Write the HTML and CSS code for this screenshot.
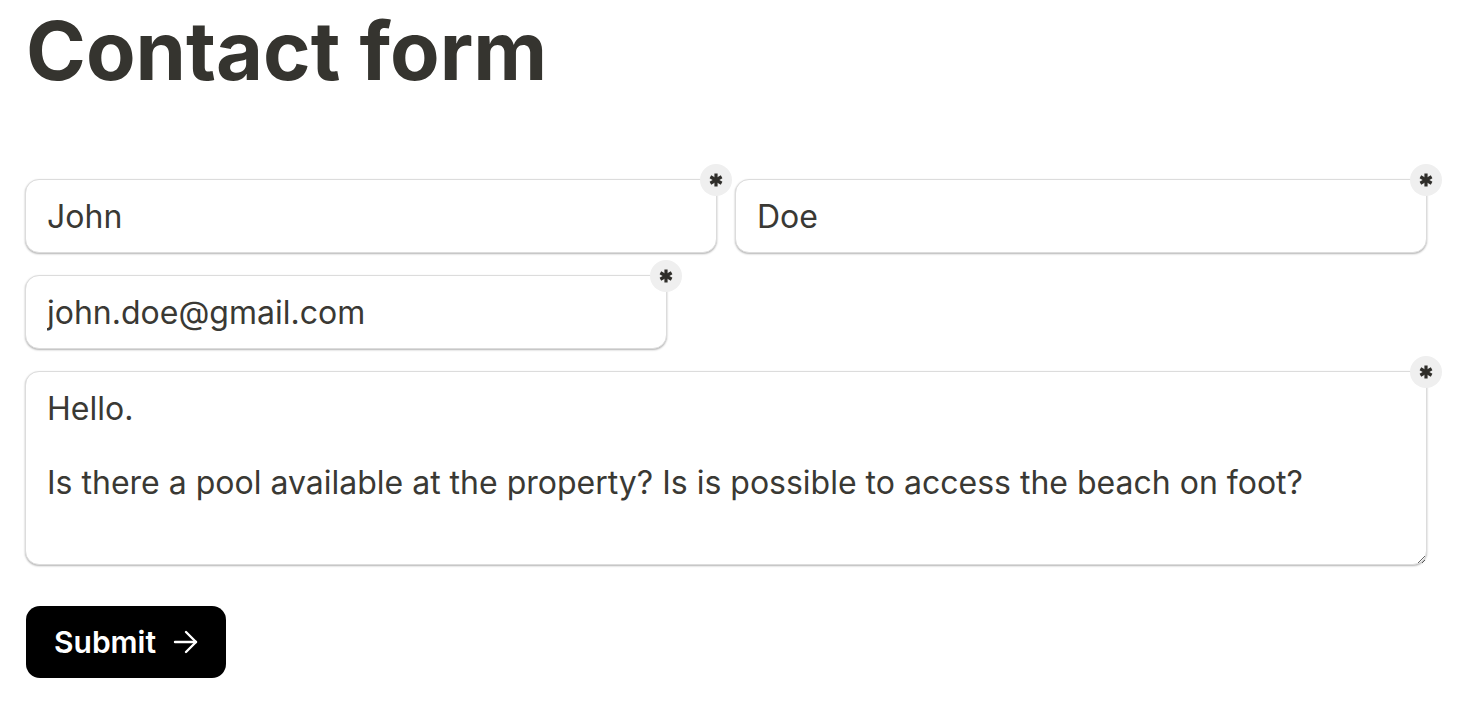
FILE: index.html
```html
<!DOCTYPE html>
<html>
<head>
<meta charset="utf-8">
<link rel="stylesheet" href="styles.css">
</head>
<body>
<main class="page">
  <h1 class="title">Contact form</h1>
  <form class="form">
    <div class="row">
      <div class="field field-half">
        <input class="control" type="text" value="John">
        <span class="req"><svg viewBox="0 0 14 14" width="14" height="14"><g stroke="#2f2e2a" stroke-width="3.2" stroke-linecap="butt"><line x1="7" y1="0.5" x2="7" y2="13.5"/><line x1="1.4" y1="3.75" x2="12.6" y2="10.25"/><line x1="1.4" y1="10.25" x2="12.6" y2="3.75"/></g></svg></span>
      </div>
      <div class="field field-half">
        <input class="control" type="text" value="Doe">
        <span class="req"><svg viewBox="0 0 14 14" width="14" height="14"><g stroke="#2f2e2a" stroke-width="3.2" stroke-linecap="butt"><line x1="7" y1="0.5" x2="7" y2="13.5"/><line x1="1.4" y1="3.75" x2="12.6" y2="10.25"/><line x1="1.4" y1="10.25" x2="12.6" y2="3.75"/></g></svg></span>
      </div>
    </div>
    <div class="row">
      <div class="field field-email">
        <input class="control" type="email" value="john.doe@gmail.com">
        <span class="req"><svg viewBox="0 0 14 14" width="14" height="14"><g stroke="#2f2e2a" stroke-width="3.2" stroke-linecap="butt"><line x1="7" y1="0.5" x2="7" y2="13.5"/><line x1="1.4" y1="3.75" x2="12.6" y2="10.25"/><line x1="1.4" y1="10.25" x2="12.6" y2="3.75"/></g></svg></span>
      </div>
    </div>
    <div class="row">
      <div class="field field-full">
        <textarea class="control area">Hello.

Is there a pool available at the property? Is is possible to access the beach on foot?</textarea>
        <span class="req"><svg viewBox="0 0 14 14" width="14" height="14"><g stroke="#2f2e2a" stroke-width="3.2" stroke-linecap="butt"><line x1="7" y1="0.5" x2="7" y2="13.5"/><line x1="1.4" y1="3.75" x2="12.6" y2="10.25"/><line x1="1.4" y1="10.25" x2="12.6" y2="3.75"/></g></svg></span>
      </div>
    </div>
    <div class="actions">
      <button class="submit" type="button">Submit <svg class="arrow" viewBox="0 0 26 24" width="26" height="24"><g fill="none" stroke="#fff" stroke-width="2.4" stroke-linecap="round" stroke-linejoin="round"><line x1="2" y1="12" x2="23" y2="12"/><polyline points="13,2 23,12 13,22"/></g></svg></button>
    </div>
  </form>
</main>
</body>
</html>
```

FILE: styles.css
```css
* { box-sizing: border-box; }

html, body {
  margin: 0;
  padding: 0;
  background: #ffffff;
}

body {
  font-family: Inter, "Noto Sans", sans-serif;
  color: #35342f;
}

.page {
  padding: 11px 0 0 25px;
}

.title {
  margin: 0;
  font-size: 81px;
  line-height: 80px;
  font-weight: 700;
  letter-spacing: 0;
  color: #35342f;
  padding-left: 1px;
}

.form {
  margin-top: 88px;
  display: flex;
  flex-direction: column;
  gap: 22px;
  width: 1402px;
}

.row {
  display: flex;
  gap: 18px;
}

.field {
  position: relative;
}

.field-half { width: 692px; }
.field-email { width: 642px; }
.field-full { width: 1402px; }

.control {
  display: block;
  width: 100%;
  height: 74px;
  margin: 0;
  padding: 0 21px;
  font-family: Inter, "Noto Sans", sans-serif;
  font-size: 32px;
  color: #3a3934;
  background: #fff;
  border: 1px solid #dcdcdc;
  border-radius: 14px;
  box-shadow: 0 1px 2px rgba(0, 0, 0, 0.3);
  outline: none;
}

.area {
  height: 194px;
  padding: 18px 21px;
  line-height: 37px;
  resize: vertical;
}

.req {
  position: absolute;
  top: -15px;
  right: -15px;
  width: 32px;
  height: 32px;
  border-radius: 50%;
  background: #efefef;
  display: flex;
  align-items: center;
  justify-content: center;
}

.req svg { display: block; }

.actions {
  margin-top: 19px;
  padding-left: 1px;
}

.submit {
  display: inline-flex;
  align-items: center;
  gap: 17px;
  width: 200px;
  height: 72px;
  padding: 0 0 0 28px;
  background: #000;
  color: #fff;
  border: none;
  border-radius: 14px;
  font-family: Inter, "Noto Sans", sans-serif;
  font-size: 30px;
  font-weight: 600;
  cursor: pointer;
}

.arrow { display: block; }
```
